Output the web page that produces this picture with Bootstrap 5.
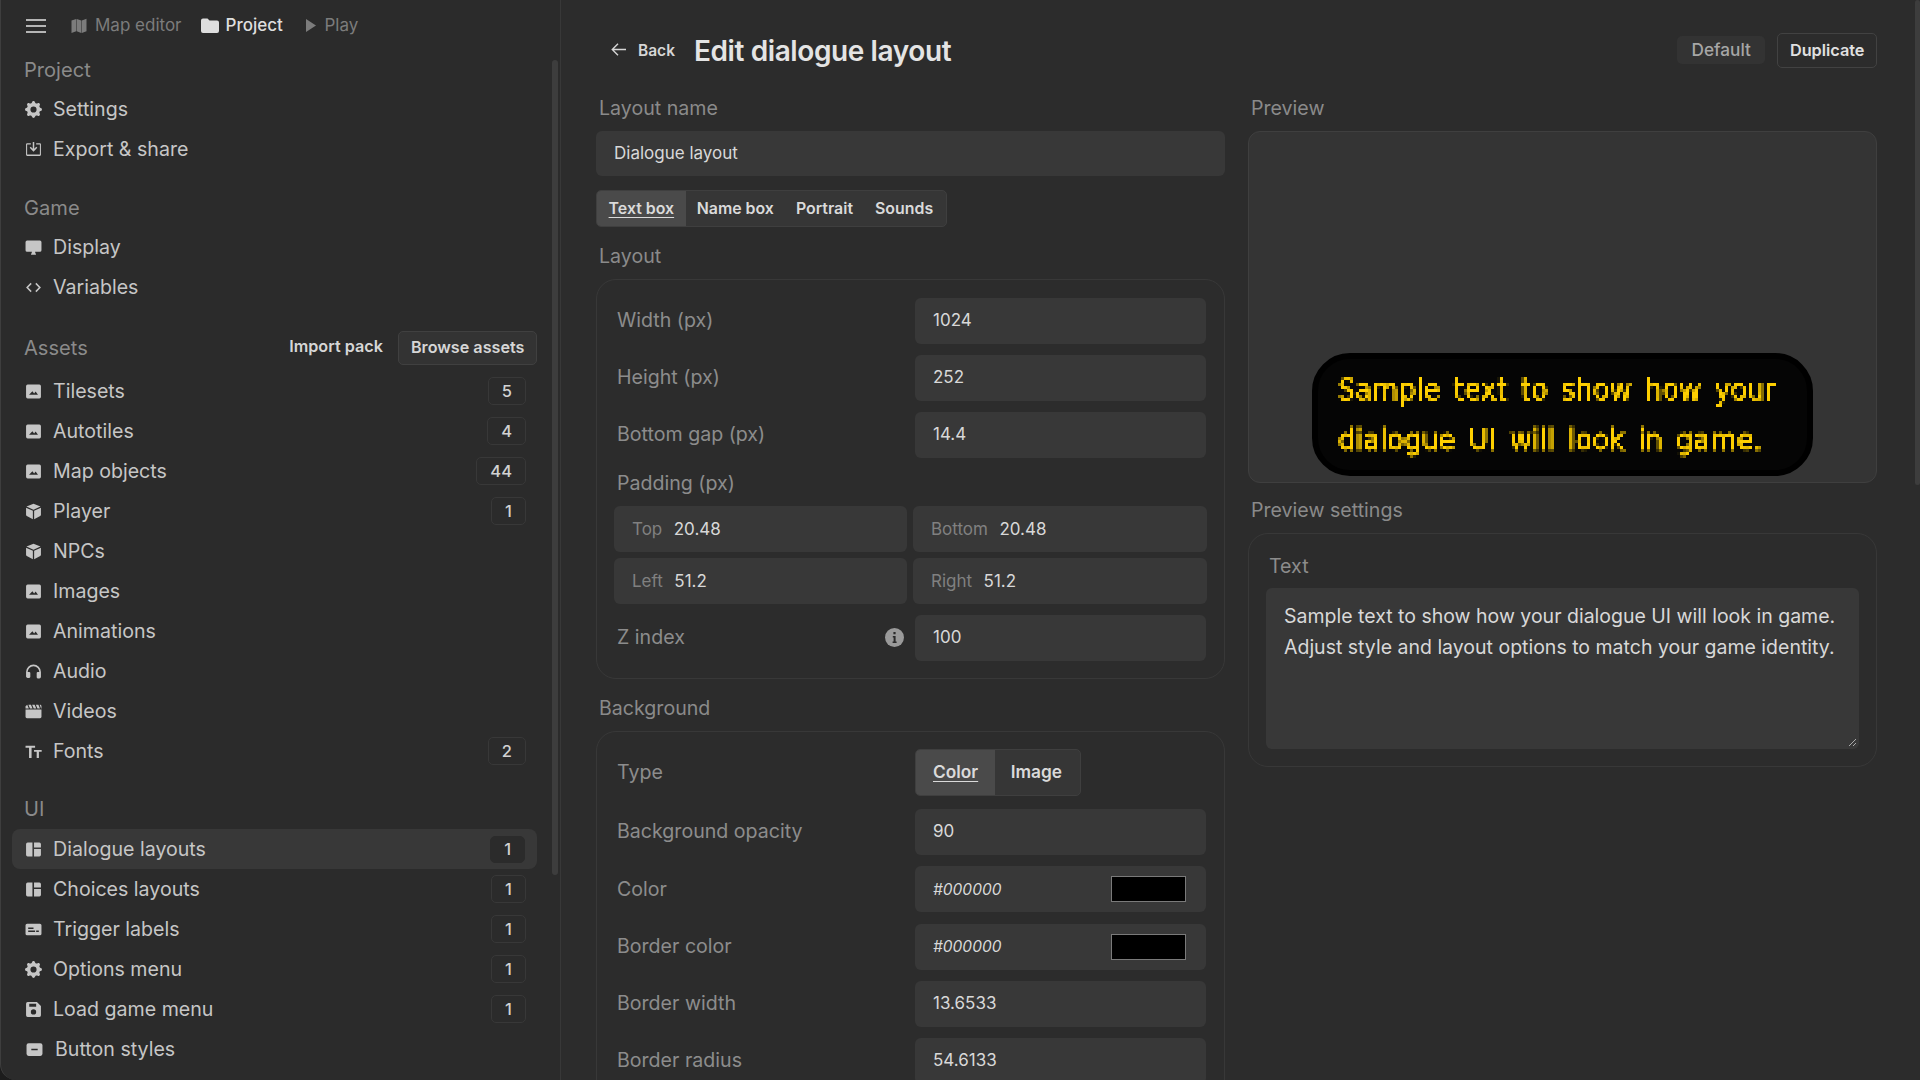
<!DOCTYPE html>
<html lang="en">
<head>
    <meta charset="UTF-8">
    <title>Edit dialogue layout</title>
    <link href="https://cdn.jsdelivr.net/npm/bootstrap@5.3.0/dist/css/bootstrap.min.css" rel="stylesheet">
    <style>
        html, body { height: 100%; }
        body {
            font-family: Inter, "Liberation Sans", sans-serif;
            background: #1c1c1c;
            color: #dcdcdc;
            overflow: hidden;
            font-size: 19.6px;
        }
        svg { display: block; flex: none; fill: currentColor; }

        /* sidebar */
        .side-pane {
            width: 561px;
            height: 1080px;
            flex: none;
            position: relative;
            background: #2b2b2b;
            border-left: 1px solid #3e3e3e;
            border-right: 1px solid #383838;
            border-bottom-left-radius: 16px;
            padding: 0 23px 0 11px;
        }
        .top-tabs { height: 52px; padding: 0 0 1px 14px; font-size: 17px; color: #7c7c7c; }
        .top-tabs .burger { color: #b5b5b5; margin-right: 25px; }
        .top-tab { display: flex; align-items: center; gap: 8px; margin-right: 19px; }
        .top-tab.on { color: #dedede; font-weight: 500; gap: 7px; margin-right: 15.6px; }
        .side-head { height: 36px; margin-bottom: 1px; padding: 0 0 0 12px; font-size: 20.1px; color: #8a8a8a; display: flex; align-items: center; justify-content: space-between; }
        .side-row { height: 40px; padding: 2px 11px 0 13px; display: flex; align-items: center; gap: 11px; color: #c6c6c6; border-radius: 8px; }
        .side-row svg { margin-top: -2px; }
        .side-row.on { background: #383838; }
        .side-row.wide-icon { padding-left: 14px; gap: 12px; }
        .side-row .count {
            margin-left: auto; margin-top: -2px; height: 28px; min-width: 35px; padding: 0 13px;
            display: flex; align-items: center; justify-content: center;
            border: 1px solid #383838; border-radius: 5px;
            font-size: 16.5px; font-weight: 500; color: #d2d2d2;
        }
        .side-row.on .count { background: #2b2b2b; border-color: #2b2b2b; height: 27px; min-width: 33px; margin-right: 1px; }
        .gap-a { margin-top: 21px; }
        .gap-b { margin-top: 23px; margin-bottom: 5px; }
        .gap-c { margin-top: 19px; margin-bottom: 3px; padding-top: 2px; }
        .btn-asset { font-size: 16.2px; font-weight: 600; color: #d6d6d6; padding: 0 11.5px; height: 34px; line-height: 31px; border-radius: 5px; margin-top: -1px; }
        .btn-asset.boxed { background: #333; border: 1px solid #404040; }
        .fake-scroll { position: absolute; background: #3d3d3d; border-radius: 3px; }

        /* main */
        .main-pane { position: relative; flex: 1; min-width: 0; padding: 0 44px 0 35px; background: #2c2c2c; }
        .title-bar { height: 94px; padding: 8px 0 0 15px; }
        .back-link { display: flex; align-items: center; gap: 12px; font-size: 15.5px; font-weight: 600; color: #d6d6d6; margin-right: 19px; }
        .back-link svg { margin-top: -4px; }
        .page-title { font-size: 28px; letter-spacing: -.4px; font-weight: 600; margin: 2px 0 0; color: #e4e4e4; }
        .btn-plain { font-size: 17.2px; height: 28px; line-height: 28px; padding: 0 14.5px; background: #333; color: #a6a6a6; border-radius: 5px; font-weight: 500; margin: -2px 12px 0 auto; }
        .btn-line { font-size: 16.3px; height: 35px; line-height: 33px; padding: 0 11.5px; border: 1px solid #424242; color: #e0e0e0; border-radius: 5px; font-weight: 600; margin: -2px -1px 0 0; }
        .cols { display: grid; grid-template-columns: 629px 629px; column-gap: 23px; }
        .sec-label { color: #8a8a8a; height: 29px; line-height: 29px; padding-left: 3px; margin-bottom: 8px; }
        .field-box { height: 45px; background: #383838; border-radius: 6px; padding: 0 18px; display: flex; align-items: center; font-size: 17px; color: #d8d8d8; }
        .seg { display: inline-flex; border: 1px solid #3f3f3f; background: #363636; border-radius: 5px; font-size: 15.9px; font-weight: 600; color: #dadada; overflow: hidden; }
        .seg span { padding: 0 11px; }
        .seg .on { background: #4a4a4a; padding: 0 11.6px; }
        .seg .on u { text-underline-offset: 3px; text-decoration-thickness: 1px; }
        .tab-seg { height: 37px; line-height: 36px; margin: 14px 0 15px; }
        .tab-seg span:last-child { padding-right: 13px; }
        .type-seg { height: 47px; line-height: 44px; font-size: 17.3px; }
        .type-seg .on { padding: 0 17px; }
        .type-seg span { padding: 0 18px 0 15.5px; }
        .panel-box { border: 1px solid #383838; border-radius: 20px; padding: 18px 18px 6px 20px; margin-bottom: 15px; }
        .panel-box.tight { padding-top: 17px; }
        .form-line { display: flex; align-items: center; height: 46px; margin-bottom: 11px; }
        .tight .form-line { margin-bottom: 11.3px; }
        .tight .form-line:first-child { height: 47px; margin-bottom: 13px; }
        .form-line .name { width: 298px; flex: none; color: #8c8c8c; display: flex; justify-content: space-between; align-items: center; padding-right: 11px; }
        .form-line .field-box { flex: 1; height: 46px; }
        .pad-title { color: #8c8c8c; height: 37px; line-height: 29px; }
        .pad-grid { display: grid; grid-template-columns: 293px 294px; gap: 6px; margin: 0 0 11px -3px; }
        .pad-grid .field-box { height: 46px; padding-top: 2px; }
        .pad-grid i { font-style: normal; color: #808080; margin-right: 11.5px; }
        .hex { font-style: italic; font-size: 15.5px; }
        .swatch { width: 75px; height: 26px; background: #000; border: 1px solid #7a7a7a; margin-left: auto; margin-right: 2px; }
        .preview-box { height: 352px; background: #343434; border: 1px solid #3f3f3f; border-radius: 12px; margin-bottom: 13px; position: relative; }
        .dialogue-box {
            position: absolute; left: 63px; bottom: 6px; width: 501px; height: 123px;
            background: #050505; border: 6px solid #000; border-radius: 38px;
            padding: 6px 0 0 20px;
        }
        .pixel-text { display: block; width: 460px; height: 104px; filter: url(#pixelate); }
        .pixel-lines {
            display: block; transform: scaleY(1.12); transform-origin: top left;
            color: #ffd000; font-family: "DejaVu Sans", sans-serif; font-size: 27.3px; word-spacing: 4.5px; line-height: 44.6px; white-space: nowrap;
            -webkit-text-stroke: .7px #ffd000;
        }
        .text-panel { border: 1px solid #383838; border-radius: 20px; padding: 18px 17px 17px 17px; height: 234px; }
        .text-panel .title { color: #8c8c8c; height: 36px; line-height: 28px; padding-left: 3px; }
        .text-area { height: 161px; background: #383838; border-radius: 6px; padding: 13px 18px; font-size: 19.5px; line-height: 30.5px; color: #d8d8d8; position: relative; white-space: nowrap; }
        .grip { position: absolute; right: 2px; bottom: 2px; }
    </style>
</head>
<body class="d-flex">
    <svg width="0" height="0" class="position-absolute">
        <filter id="pixelate" x="0" y="0" width="100%" height="100%" color-interpolation-filters="sRGB">
            <feFlood x="1" y="1" width="1" height="1" flood-color="#fff"/>
            <feComposite width="3" height="3"/>
            <feTile result="grid"/>
            <feComposite in="SourceGraphic" in2="grid" operator="in"/>
            <feMorphology operator="dilate" radius="1"/>
        </filter>
        <symbol id="i-gear" viewBox="0 0 16 16"><path d="M9.400 1.100c-.4-1.400-2.400-1.400-2.800 0l-.1.300c-.3.900-1.300 1.300-2.100.900l-.3-.2c-1.300-.7-2.700.7-2 2l.2.300c.4.800 0 1.800-.9 2.100l-.3.100c-1.400.4-1.400 2.400 0 2.800l.3.100c.9.300 1.300 1.300.9 2.100l-.2.3c-.7 1.300.7 2.700 2 2l.3-.2c.8-.4 1.800 0 2.100.9l.1.300c.4 1.400 2.400 1.400 2.800 0l.1-.3c.3-.9 1.300-1.300 2.100-.9l.3.200c1.300.7 2.700-.7 2-2l-.2-.3c-.4-.8 0-1.800.9-2.100l.3-.1c1.400-.4 1.400-2.400 0-2.800l-.3-.1c-.9-.3-1.300-1.300-.9-2.100l.2-.3c.7-1.300-.7-2.700-2-2l-.3.200c-.8.400-1.800 0-2.100-.9zM8 10.900a2.900 2.900 0 1 1 0-5.800 2.900 2.900 0 0 1 0 5.800z"/></symbol>
        <symbol id="i-export" viewBox="0 0 16 16"><path d="M2 2h3.500v1.200H2.200a.2.200 0 0 0-.2.200v9.200c0 .1.100.2.200.2h11.600a.2.200 0 0 0 .2-.2V3.400a.2.200 0 0 0-.2-.2h-3.300V2H14a1 1 0 0 1 1 1v10a1 1 0 0 1-1 1H2a1 1 0 0 1-1-1V3a1 1 0 0 1 1-1z"/><path d="M7.300 1h1.400v6.300l1.900-1.900 1 1L8 10 4.400 6.400l1-1 1.900 1.900z"/></symbol>
        <symbol id="i-display" viewBox="0 0 16 16"><path d="M2 1.500h12a1.500 1.500 0 0 1 1.500 1.500v7.500A1.500 1.500 0 0 1 14 12H9.500c0 .9.300 1.500.8 2v.8H5.700V14c.5-.5.800-1.100.8-2H2A1.500 1.500 0 0 1 .5 10.500V3A1.500 1.500 0 0 1 2 1.500z"/></symbol>
        <symbol id="i-code" viewBox="0 0 16 16"><path d="M5.300 3.600l1 1L3 8l3.300 3.400-1 1L1 8zM10.700 3.600l-1 1L13 8l-3.300 3.400 1 1L15 8z"/></symbol>
        <symbol id="i-image" viewBox="0 0 16 16"><path fill-rule="evenodd" d="M2.500 1.500h11a1.500 1.500 0 0 1 1.500 1.500v10a1.500 1.500 0 0 1-1.500 1.500h-11A1.500 1.500 0 0 1 1 13V3a1.500 1.500 0 0 1 1.500-1.500zM3.800 11h8.400L10 8 8.600 9.800 7 7.700z"/></symbol>
        <symbol id="i-box" viewBox="0 0 16 16"><path d="M8 .6l6.600 2.800L8 6.300 1.400 3.400zM1 4.500l6.400 2.800v8.100L1.700 12.200a1.300 1.300 0 0 1-.7-1.100zM15 4.500l-6.400 2.800v8.100l5.700-3.200a1.300 1.300 0 0 0 .7-1.100z"/></symbol>
        <symbol id="i-audio" viewBox="0 0 16 16"><path d="M8 1.500a7 7 0 0 1 7 7v4.500a1.500 1.500 0 0 1-1.500 1.500H12a1 1 0 0 1-1-1V9.500a1 1 0 0 1 1-1h1.500a5.500 5.500 0 0 0-11 0H4a1 1 0 0 1 1 1V13a1 1 0 0 1-1 1H2.500A1.500 1.500 0 0 1 1 13V8.500a7 7 0 0 1 7-7z"/></symbol>
        <symbol id="i-film" viewBox="0 0 16 16"><path d="M.5 6.200h15v6.800a1.300 1.300 0 0 1-1.300 1.300H1.800A1.300 1.300 0 0 1 .5 13zM.5 5.100V3l1.600-1.300 1.500 3.400zM4.700 5.100L3.200 1.700h2.400l1.500 3.400zM8.200 5.100L6.700 1.700h2.400l1.500 3.400zM11.700 5.100l-1.500-3.400h2.400l1.500 3.400zM15.500 5.100h-.4l-1.300-3.400h.4c.7 0 1.300.6 1.300 1.300z"/></symbol>
        <symbol id="i-type" viewBox="0 0 16 16"><path d="M.5 2.500h9v2H6.200V14H3.800V4.500H.5zM8.500 6.500h7.200v1.700h-2.600V14H11V8.200H8.500z"/></symbol>
        <symbol id="i-layout" viewBox="0 0 16 16"><path d="M2.500 1.500H7v13H2.500A1.500 1.500 0 0 1 1 13V3a1.500 1.500 0 0 1 1.500-1.500zM8.500 1.500h5A1.500 1.500 0 0 1 15 3v3H8.500zM8.500 7.500H15V13a1.500 1.500 0 0 1-1.500 1.500h-5z"/></symbol>
        <symbol id="i-label" viewBox="0 0 16 16"><path fill-rule="evenodd" d="M2 2.500h12A1.500 1.500 0 0 1 15.500 4v8a1.500 1.500 0 0 1-1.500 1.500H2A1.500 1.500 0 0 1 .5 12V4A1.500 1.500 0 0 1 2 2.500zM3 6v1.500h5V6zM3 9v1.300h6.500V9zM10.500 9v1.300H13V9z"/></symbol>
        <symbol id="i-save" viewBox="0 0 16 16"><path fill-rule="evenodd" d="M2.500 1h8.700L15 4.800v8.700a1.500 1.500 0 0 1-1.500 1.500h-11A1.500 1.500 0 0 1 1 13.500v-11A1.500 1.500 0 0 1 2.500 1zM4 2.500V5.500h6.500V2.500zM8 7.800a2.500 2.500 0 1 0 0 5 2.500 2.500 0 0 0 0-5z"/></symbol>
        <symbol id="i-button" viewBox="0 0 16 16"><path fill-rule="evenodd" d="M2.500 2h11A2 2 0 0 1 15.500 4v8a2 2 0 0 1-2 2h-11a2 2 0 0 1-2-2V4a2 2 0 0 1 2-2zM5 7.200v1.600h6V7.200z"/></symbol>
    </svg>

    <aside class="side-pane">
        <div class="top-tabs d-flex align-items-center">
            <svg class="burger" width="20" height="14" viewBox="0 0 20 14"><path d="M0 0h20v2H0zM0 6h20v2H0zM0 12h20v2H0z"/></svg>
            <div class="top-tab">
                <svg width="16" height="16" viewBox="0 0 16 16"><path d="M.5 2.600L5.200.9v12.300l-4.700 1.900zM5.700.9l4.600 1.700v12.400l-4.600-1.800zM10.800 2.600L15.500.8v12.400L10.800 15z"/></svg>
                Map editor
            </div>
            <div class="top-tab on">
                <svg width="18" height="15" viewBox="0 0 18 15"><path d="M2 .5h4.500L8.500 2.500H16a2 2 0 0 1 2 2V13a2 2 0 0 1-2 2H2a2 2 0 0 1-2-2V2.500a2 2 0 0 1 2-2z"/></svg>
                Project
            </div>
            <div class="top-tab ps-2">
                <svg width="10" height="13" viewBox="0 0 10 13"><path d="M0 0l10 6.500L0 13z"/></svg>
                Play
            </div>
        </div>

        <div class="side-head">Project</div>
        <div class="side-row"><svg width="17" height="17"><use href="#i-gear"/></svg>Settings</div>
        <div class="side-row"><svg width="17" height="17"><use href="#i-export"/></svg>Export &amp; share</div>

        <div class="side-head gap-a">Game</div>
        <div class="side-row"><svg width="17" height="17"><use href="#i-display"/></svg>Display</div>
        <div class="side-row"><svg width="17" height="17"><use href="#i-code"/></svg>Variables</div>

        <div class="side-head gap-b">
            <span>Assets</span>
            <span class="d-flex align-items-center gap-1">
                <span class="btn-asset">Import pack</span>
                <span class="btn-asset boxed">Browse assets</span>
            </span>
        </div>
        <div class="side-row"><svg width="17" height="17"><use href="#i-image"/></svg>Tilesets<span class="count">5</span></div>
        <div class="side-row"><svg width="17" height="17"><use href="#i-image"/></svg>Autotiles<span class="count">4</span></div>
        <div class="side-row"><svg width="17" height="17"><use href="#i-image"/></svg>Map objects<span class="count">44</span></div>
        <div class="side-row"><svg width="17" height="17"><use href="#i-box"/></svg>Player<span class="count">1</span></div>
        <div class="side-row"><svg width="17" height="17"><use href="#i-box"/></svg>NPCs</div>
        <div class="side-row"><svg width="17" height="17"><use href="#i-image"/></svg>Images</div>
        <div class="side-row"><svg width="17" height="17"><use href="#i-image"/></svg>Animations</div>
        <div class="side-row"><svg width="17" height="17"><use href="#i-audio"/></svg>Audio</div>
        <div class="side-row"><svg width="17" height="17"><use href="#i-film"/></svg>Videos</div>
        <div class="side-row"><svg width="17" height="17"><use href="#i-type"/></svg>Fonts<span class="count">2</span></div>

        <div class="side-head gap-c">UI</div>
        <div class="side-row on"><svg width="17" height="17"><use href="#i-layout"/></svg>Dialogue layouts<span class="count">1</span></div>
        <div class="side-row"><svg width="17" height="17"><use href="#i-layout"/></svg>Choices layouts<span class="count">1</span></div>
        <div class="side-row"><svg width="17" height="17"><use href="#i-label"/></svg>Trigger labels<span class="count">1</span></div>
        <div class="side-row"><svg width="17" height="17"><use href="#i-gear"/></svg>Options menu<span class="count">1</span></div>
        <div class="side-row"><svg width="17" height="17"><use href="#i-save"/></svg>Load game menu<span class="count">1</span></div>
        <div class="side-row wide-icon"><svg width="17" height="17"><use href="#i-button"/></svg>Button styles</div>

        <div class="fake-scroll" style="right:2px;top:60px;width:6px;height:815px"></div>
    </aside>

    <main class="main-pane">
        <div class="title-bar d-flex align-items-center">
            <span class="back-link">
                <svg width="15" height="13" viewBox="0 0 15 13"><path d="M6.500.3l1 1L3 5.800h12v1.400H3l4.500 4.500-1 1L.3 6.500z"/></svg>
                Back
            </span>
            <h1 class="page-title">Edit dialogue layout</h1>
            <span class="btn-plain">Default</span>
            <span class="btn-line">Duplicate</span>
        </div>

        <div class="cols">
            <div>
                <div class="sec-label">Layout name</div>
                <div class="field-box">Dialogue layout</div>
                <div class="seg tab-seg">
                    <span class="on"><u>Text box</u></span><span>Name box</span><span>Portrait</span><span>Sounds</span>
                </div>
                <div class="sec-label">Layout</div>
                <div class="panel-box">
                    <div class="form-line"><div class="name">Width (px)</div><div class="field-box">1024</div></div>
                    <div class="form-line"><div class="name">Height (px)</div><div class="field-box">252</div></div>
                    <div class="form-line"><div class="name">Bottom gap (px)</div><div class="field-box">14.4</div></div>
                    <div class="pad-title">Padding (px)</div>
                    <div class="pad-grid">
                        <div class="field-box"><i>Top</i>20.48</div>
                        <div class="field-box"><i>Bottom</i>20.48</div>
                        <div class="field-box"><i>Left</i>51.2</div>
                        <div class="field-box"><i>Right</i>51.2</div>
                    </div>
                    <div class="form-line">
                        <div class="name">Z index
                            <svg width="19" height="19" viewBox="0 0 19 19"><path fill="#9a9a9a" d="M9.500 0a9.500 9.500 0 1 1 0 19 9.500 9.500 0 0 1 0-19z"/><path fill="#2b2b2b" d="M8.400 4h2.200v2.200H8.400zM7.800 8h2.800v5.500h1v1.500H7.600v-1.500h1V9.500h-.8z"/></svg>
                        </div>
                        <div class="field-box">100</div>
                    </div>
                </div>
                <div class="sec-label">Background</div>
                <div class="panel-box tight">
                    <div class="form-line">
                        <div class="name">Type</div>
                        <div class="seg type-seg"><span class="on"><u>Color</u></span><span>Image</span></div>
                    </div>
                    <div class="form-line"><div class="name">Background opacity</div><div class="field-box">90</div></div>
                    <div class="form-line"><div class="name">Color</div><div class="field-box"><span class="hex">#000000</span><div class="swatch"></div></div></div>
                    <div class="form-line"><div class="name">Border color</div><div class="field-box"><span class="hex">#000000</span><div class="swatch"></div></div></div>
                    <div class="form-line"><div class="name">Border width</div><div class="field-box">13.6533</div></div>
                    <div class="form-line"><div class="name">Border radius</div><div class="field-box">54.6133</div></div>
                </div>
            </div>
            <div>
                <div class="sec-label">Preview</div>
                <div class="preview-box">
                    <div class="dialogue-box">
                        <span class="pixel-text"><span class="pixel-lines">Sample text to show how your<br>dialogue UI will look in game.</span></span>
                    </div>
                </div>
                <div class="sec-label">Preview settings</div>
                <div class="text-panel">
                    <div class="title">Text</div>
                    <div class="text-area">Sample text to show how your dialogue UI will look in game.<br>Adjust style and layout options to match your game identity.
                        <svg class="grip" width="9" height="9" viewBox="0 0 9 9"><path d="M8 1L1 8M8 5L5 8" stroke="#aaa" stroke-width="1" fill="none"/></svg>
                    </div>
                </div>
            </div>
        </div>
        <div class="fake-scroll" style="right:0;top:0;width:5px;height:485px"></div>
    </main>

    <script src="https://cdn.jsdelivr.net/npm/bootstrap@5.3.0/dist/js/bootstrap.bundle.min.js"></script>
</body>
</html>
